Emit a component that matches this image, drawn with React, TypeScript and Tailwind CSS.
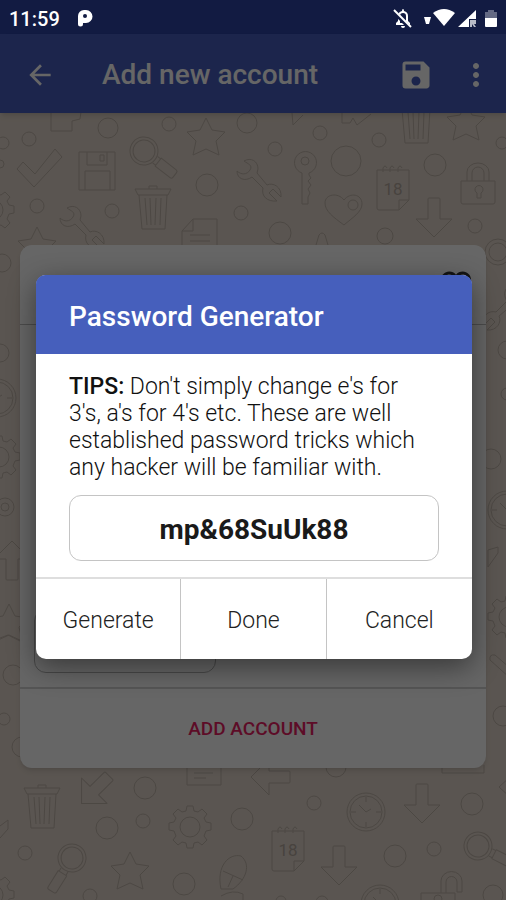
import React from 'react';
import { MdArrowBack, MdFavoriteBorder, MdMoreVert, MdSave } from 'react-icons/md';

const STAR = 'M0 -19 L6 -7 L19 -5 L10 4 L13 18 L0 12 L-13 18 L-10 4 L-19 -5 L-6 -7 Z';
const ARROW = 'M-6 -19 Q-6 -20 -5 -20 H5 Q6 -20 6 -19 V1 H18 L0 19 L-18 1 H-6 Z';
const WRENCH =
    'M-22 -8 C-18 -4 -12 -4 -9 -9 C-6 -14 -11 -15 -15 -18 C-8 -22 -1 -18 -1 -10 L-2 -6 L8 6 C14 3 23 8 22 18 L14 10 L10 14 L18 22 C8 23 2 17 4 9 L-7 -2 C-14 3 -22 0 -22 -8 Z';

// [cx, cy, r]
const dots = [
    [108, 128, 10], [29, 139, 7], [169, 124, 7], [247, 123, 10], [3, 143, 6], [0, 164, 4],
    [207, 185, 11], [37, 206, 7], [112, 211, 7], [241, 213, 7], [2, 263, 9], [275, 149, 7],
    [320, 133, 7], [346, 161, 15], [379, 140, 7], [502, 143, 6], [435, 165, 11], [475, 226, 7],
    [280, 233, 11], [385, 236, 8], [498, 252, 13], [498, 252, 9], [0, 353, 9], [5, 507, 9],
    [5, 507, 4], [13, 675, 10], [4, 719, 6], [22, 747, 10], [507, 350, 9], [507, 394, 6],
    [491, 459, 10], [503, 716, 10], [145, 788, 11], [107, 828, 11], [143, 821, 7], [242, 819, 11],
    [25, 853, 7], [90, 896, 7], [184, 884, 11], [336, 767, 10], [314, 803, 7], [472, 804, 11],
    [395, 856, 11], [434, 849, 7], [493, 895, 10], [281, 901, 5], [322, 902, 6],
];

const at = (x: number, y: number, angle = 0) => `translate(${x} ${y}) rotate(${angle})`;

type ShapeProps = { x: number; y: number; angle?: number };

const Trash = ({ x, y }: ShapeProps) => (
    <g transform={at(x, y)}>
        <path d="M-18 -18 H18 L15 -12 H-15 Z M-4 -18 V-21 H4 V-18" />
        <path d="M-14 -12 L-11 22 H12 L14 -12 M-8 -9 L-6 18 M-3 -9 L-2 18 M3 -9 L2 18 M8 -9 L7 18" />
    </g>
);

const Magnifier = ({ x, y, angle = 0 }: ShapeProps) => (
    <g transform={at(x, y, angle)}>
        <circle r="14" />
        <circle r="11" />
        <path d="M14 -4 L18 -4 V4 H14 M18 -5 H37 Q39 -5 39 -3 V3 Q39 5 37 5 H18 Z" />
    </g>
);

const Clock = ({ x, y }: ShapeProps) => (
    <g transform={at(x, y)}>
        <circle r="19" />
        <circle r="16" />
        <path d="M0 -15 V-10 M0 15 V10 M-15 0 H-10 M15 0 H10 M-7 -7 L0 0 L5 -3" />
    </g>
);

const Calendar = ({ x, y }: ShapeProps) => (
    <g transform={at(x, y)}>
        <path d="M-16 -18 H16 V12 L6 22 H-14 Q-16 22 -16 20 Z M6 22 V12 H16" />
        <path d="M-10 -16 V-20 Q-8 -24 -6 -20 M-3 -16 V-20 Q-1 -24 1 -20 M5 -16 V-20 Q7 -24 9 -20" />
        <text y="7" textAnchor="middle" fontSize="17" strokeWidth="0" fill="#b3a79d">
            18
        </text>
    </g>
);

const Gear = ({ x, y }: ShapeProps) => (
    <g transform={at(x, y)}>
        <circle r="10" />
        <path d="M-3 -21 H3 L4 -16 L8 -15 L12 -18 L17 -13 L14 -9 L16 -5 L21 -4 V3 L16 4 L14 9 L17 13 L12 18 L8 15 L4 16 L3 21 H-3 L-4 16 L-8 15 L-12 18 L-17 13 L-14 9 L-16 4 L-21 3 V-4 L-16 -5 L-14 -9 L-17 -13 L-12 -18 L-8 -15 L-4 -16 Z" />
    </g>
);

const Lock = ({ x, y }: ShapeProps) => (
    <g transform={at(x, y)}>
        <path d="M-17 -2 H17 V19 Q17 21 15 21 H-15 Q-17 21 -17 19 Z M-11 -2 V-11 A11 9 0 0 1 11 -11 V-2 M-6 -2 V-10 A6 6 0 0 1 6 -10 V-2" />
        <path d="M-1 15 V10 A4 4 0 1 1 3 10 V15 Z" />
    </g>
);

const Wallpaper = () => (
    <svg
        aria-hidden="true"
        className="absolute inset-0 w-full h-full"
        viewBox="0 113 506 787"
        preserveAspectRatio="xMidYMin slice"
        fill="none"
        stroke="#bfb3a9"
        strokeWidth="1"
        strokeLinejoin="round"
    >
        {dots.map(([cx, cy, r], i) => (
            <circle key={i} cx={cx} cy={cy} r={r} />
        ))}

        {/* Above the card */}
        <path d="M51 110 V131 H72 V121 L80 119 L81 112" />
        <path d="M17 169 L23 162 L35 174 L55 149 L62 157 L34 187 Z" />
        <path d="M79 152 H115 V190 H79 Z M87 152 V165 H107 V152 M85 190 V171 H110 V190 M100 155 H104 V161 H100 Z" />
        <path d="M182 250 V231 L193 219 H217 V250 M182 231 H193 V219 M190 235 H210 M190 241 H210" />
        <path d="M292 113 L293 125 L303 115 M342 113 V123 H350 L353 118 L357 125 L371 114" />
        <path d="M302 173 A11 11 0 1 1 309 173 V175 L311 178 L308 181 L311 185 L308 189 L310 193 L308 197 V204 H302 Z" />
        <circle cx="305" cy="161" r="4" />
        <path d="M344 225 C333 217 325 211 325 203 C325 194 338 192 344 200 C350 192 362 194 362 204 C362 212 352 218 344 225 Z" />
        <circle cx="353" cy="205" r="5" />
        <path d="M316 245 L319 235 Q322 231 325 235 L328 245" />
        <path d={STAR} transform={at(206, 137)} />
        <path d={STAR} transform={at(37, 246)} />
        <path d={STAR} transform={at(466, 122)} />
        <path d={WRENCH} transform={at(82, 226)} />
        <path d={WRENCH} transform={at(259, 179)} />
        <path d={ARROW} transform={at(434, 218)} />
        <Magnifier x={144} y={151} angle={38} />
        <Trash x={153} y={207} />
        <Trash x={416} y={121} />
        <Calendar x={393} y={188} />
        <Lock x={478} y={183} />
        <Gear x={-7} y={210} />

        {/* Beside the card */}
        <Clock x={-3} y={398} />
        <Gear x={-1} y={457} />
        <path d={ARROW} transform={at(12, 560, 180)} />
        <path d={STAR} transform={at(9, 623)} />
        <path d="M0 638 L8 635 L20 641" />
        <path d={WRENCH} transform={at(505, 308, 90)} />
        <Clock x={507} y={510} />
        <path d="M488 550 L498 547 V553 L488 567 Z" />
        <Gear x={509} y={617} />
        <path d="M510 678 L490 660 Q489 654 495 655 L510 668" />

        {/* Below the card */}
        <path d="M187 765 V785 H221 V765 M194 773 H213 M194 778 H206" />
        <path d="M442 765 V773 H484 V765 M510 777 L499 787 L510 797" />
        <path d="M0 826 L8 820 V829 L0 838" />
        <path d="M221 889 C216 866 229 853 241 856 C251 864 247 879 233 889 Z M223 871 L243 880 M233 876 L228 887" />
        <path d="M221 896 Q233 889 243 894 V905" />
        <path d={ARROW} transform={at(95, 790, 45)} />
        <path d={ARROW} transform={at(270, 777, 90)} />
        <path d={ARROW} transform={at(422, 804)} />
        <path d={ARROW} transform={at(339, 866)} />
        <path d={STAR} transform={at(130, 871)} />
        <Trash x={42} y={806} />
        <Gear x={190} y={827} />
        <Gear x={-7} y={895} />
        <Clock x={366} y={812} />
        <Clock x={380} y={904} />
        <Calendar x={288} y={849} />
        <Magnifier x={72} y={858} angle={122} />
        <Magnifier x={478} y={846} angle={27} />
        <path d="M421 905 V893 H455 V905 M441 893 V881 A10 9 0 0 1 462 881 V892 H457 V882 A5 5 0 0 0 446 882 V893" />
        <circle cx="438" cy="899" r="4" />
    </svg>
);

const StatusBar = () => (
    <div className="flex items-center h-[34px] pl-[9px] pr-2 pt-1 bg-[#121b42] text-white">
        <span className="text-[20px] leading-6 font-medium">11:59</span>
        <svg aria-hidden="true" className="ml-[14px] w-5 h-5" viewBox="0 0 20 20">
            <path
                d="M4 15 V7 A6 6 0 0 1 10 1 H12 A6 6 0 0 1 12 14 H9 V15 A2.5 2.5 0 0 1 4 15 Z"
                fill="white"
            />
            <circle cx="11" cy="7" r="2" fill="#121b42" />
        </svg>
        <div className="ml-auto flex items-center">
            {/* Muted bell, wifi, signal, battery */}
            <svg aria-hidden="true" className="w-[108px] h-6" viewBox="0 0 108 24" fill="white">
                <path d="M6 18 V16 L8 14 V9 Q8 5 12 4 Q12 2 13 2 Q14 2 14 4 Q18 5 18 9 V14 L20 16 V18 Z M10 9 V16 H16 V9 Q16 6 13 6 Q10 6 10 9 Z" fillRule="evenodd" />
                <path d="M11 19 H15 Q15 21 13 21 Q11 21 11 19 Z" />
                <path d="M4 5 L20 21" stroke="#121b42" strokeWidth="4" />
                <path d="M4 3 L21 20" stroke="white" strokeWidth="2" />
                <path d="M34 10 H41 L39 17 H36 Z" />
                <path d="M43 6 Q54 -2 65 6 L54 19 Z" />
                <path d="M68 20 L86 3 V12 H79 V20 Z" />
                <path d="M81 13 H86 V17 H84 L86 20 H84 L82 17 V20 H80 V13 Z" opacity="0.7" />
                <path d="M95 5 H98 V3 H104 V5 H107 V12 H95 Z" opacity="0.35" />
                <path d="M95 11 H107 V19 Q107 20 106 20 H96 Q95 20 95 19 Z" />
            </svg>
        </div>
    </div>
);

const AppBar = () => (
    <header className="relative z-10 flex items-center h-[79px] pl-6 pr-3 pt-[2px] bg-[#475dbe] text-white shadow-md">
        <button type="button" aria-label="Back">
            <MdArrowBack className="w-8 h-8" />
        </button>
        <h1 className="ml-[46px] flex-1 text-[28px] font-medium whitespace-nowrap">Add new account</h1>
        <button type="button" aria-label="Save">
            <MdSave className="w-9 h-9" />
        </button>
        <button type="button" aria-label="More options" className="ml-6">
            <MdMoreVert className="w-9 h-9" />
        </button>
    </header>
);

const AccountCard = () => (
    <section className="relative w-full rounded-xl bg-white shadow-md">
        <div className="flex items-center justify-end h-20 px-3 border-b border-[#bdbdbd]">
            <button type="button" aria-label="Favourite" className="text-[#333333]">
                <MdFavoriteBorder className="w-9 h-9" />
            </button>
        </div>
        <div className="flex items-end h-[362px] px-[14px] pb-[14px]">
            <div className="w-[182px] h-16 rounded-xl border border-[#b4b4b4]" />
        </div>
        <button
            type="button"
            className="w-full h-[81px] pt-[2px] border-t-2 border-[#d4d4d4] text-[19px] font-medium text-[#e91e63]"
        >
            ADD ACCOUNT
        </button>
    </section>
);

const actions = ['Generate', 'Done', 'Cancel'];

const PasswordDialog = () => (
    <div
        role="dialog"
        aria-modal="true"
        aria-labelledby="dialog-title"
        className="w-full rounded-[10px] bg-white shadow-[0_8px_28px_rgba(0,0,0,0.45)]"
    >
        <div className="flex items-center h-[79px] px-[33px] pt-1 rounded-t-[9px] bg-[#465fbc]">
            <h2 id="dialog-title" className="text-[28px] font-medium text-white">
                Password Generator
            </h2>
        </div>
        <div className="px-[33px] pt-[19px] pb-4">
            <p className="pr-4 text-[23px] leading-[27px] font-light text-[#111111]">
                <b className="font-medium">TIPS:</b> Don't simply change e's for 3's, a's for 4's etc. These
                are well established password tricks which any hacker will be familiar with.
            </p>
            <input
                type="text"
                aria-label="Generated password"
                defaultValue="mp&68SuUk88"
                className="mt-[14px] block w-full h-[66px] pt-[2px] rounded-xl border border-[#c4c4c4] text-center text-[28px] font-bold text-[#1a1a1a]"
            />
        </div>
        <div className="grid grid-cols-3 divide-x divide-[#c4c4c4] border-t-2 border-[#dedede]">
            {actions.map((action) => (
                <button key={action} type="button" className="h-20 pt-1 text-[23px] font-light text-[#222222]">
                    {action}
                </button>
            ))}
        </div>
    </div>
);

const App = () => {
    return (
        <div className="flex flex-col min-h-screen font-['Roboto',sans-serif]">
            <StatusBar />
            <div className="relative flex flex-col flex-1">
                <AppBar />
                <main className="relative flex flex-1 items-center px-5 overflow-hidden bg-[#e1d5ca]">
                    <Wallpaper />
                    <AccountCard />
                </main>
                <div className="absolute inset-0 z-20 flex items-center pl-9 pr-[34px] bg-black/60">
                    <PasswordDialog />
                </div>
            </div>
        </div>
    );
};

export default App;
